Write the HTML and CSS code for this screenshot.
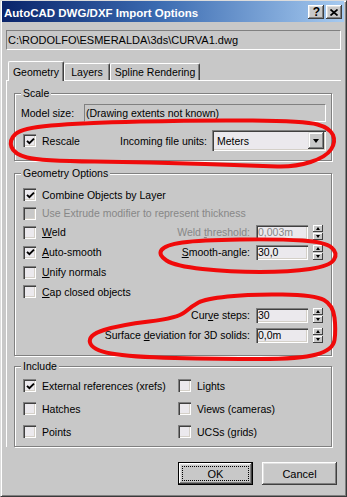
FILE: index.html
```html
<!DOCTYPE html>
<html>
<head>
<meta charset="utf-8">
<title>AutoCAD DWG/DXF Import Options</title>
<link rel="stylesheet" href="styles.css">
</head>
<body>
<div class="window">
  <div class="titlebar">
    <span class="title">AutoCAD DWG/DXF Import Options</span>
    <div class="tbtns">
      <span class="tbtn q">?</span>
      <span class="tbtn"><svg width="8" height="7" viewBox="0 0 8 7"><path d="M0.5 0.5 L7.5 6.5 M7.5 0.5 L0.5 6.5" stroke="#000" stroke-width="1.7"/></svg></span>
    </div>
  </div>
  <div class="client">
    <div class="pathfield">C:\RODOLFO\ESMERALDA\3ds\CURVA1.dwg</div>
    <div class="tabs">
      <div class="tab active t-geo">Geometry</div>
      <div class="tab t-lay">Layers</div>
      <div class="tab t-spl">Spline Rendering</div>
    </div>
    <div class="panel">
      <div class="group g-scale">
        <div class="legend">Scale</div>
        <div class="row r-model">
          <span class="lbl-model">Model size:</span>
          <div class="rofield">(Drawing extents not known)</div>
        </div>
        <div class="row r-rescale">
          <span class="cb"><svg width="9" height="9" viewBox="0 0 9 9"><path d="M1 3.8 L3.4 6.2 L8 1.6" fill="none" stroke="#000" stroke-width="1.9"/></svg></span>
          <span class="cbtext grow">Rescale</span>
          <span>Incoming file units:</span>
          <div class="combo">
            <span class="combo-text">Meters</span>
            <span class="combo-btn"><span class="tri-down"></span></span>
          </div>
        </div>
      </div>

      <div class="group g-geo">
        <div class="legend">Geometry Options</div>
        <div class="crow h19 first">
          <span class="cb"><svg width="9" height="9" viewBox="0 0 9 9"><path d="M1 3.8 L3.4 6.2 L8 1.6" fill="none" stroke="#000" stroke-width="1.9"/></svg></span>
          <span class="cbtext">Combine Objects by Layer</span>
        </div>
        <div class="crow h18 disabled">
          <span class="cb off"></span>
          <span class="cbtext">Use Extrude modifier to represent thickness</span>
        </div>
        <div class="crow h20">
          <span class="cb"></span>
          <span class="cbtext grow"><u>W</u>eld</span>
          <span class="flabel dim">Weld <u>t</u>hreshold:</span>
          <div class="field dim">0,003m</div>
          <div class="spin"><span class="sup"><span class="tri-up"></span></span><span class="sdn"><span class="tri-dn"></span></span></div>
        </div>
        <div class="crow h20">
          <span class="cb"><svg width="9" height="9" viewBox="0 0 9 9"><path d="M1 3.8 L3.4 6.2 L8 1.6" fill="none" stroke="#000" stroke-width="1.9"/></svg></span>
          <span class="cbtext grow"><u>A</u>uto-smooth</span>
          <span class="flabel"><u>S</u>mooth-angle:</span>
          <div class="field">30,0</div>
          <div class="spin"><span class="sup"><span class="tri-up"></span></span><span class="sdn"><span class="tri-dn"></span></span></div>
        </div>
        <div class="crow h20">
          <span class="cb"></span>
          <span class="cbtext"><u>U</u>nify normals</span>
        </div>
        <div class="crow h19">
          <span class="cb"></span>
          <span class="cbtext"><u>C</u>ap closed objects</span>
        </div>
        <div class="crow h20 right gap4">
          <span class="flabel">Cur<u>v</u>e steps:</span>
          <div class="field">30</div>
          <div class="spin"><span class="sup"><span class="tri-up"></span></span><span class="sdn"><span class="tri-dn"></span></span></div>
        </div>
        <div class="crow h20 right">
          <span class="flabel">Surface <u>d</u>eviation for 3D solids:</span>
          <div class="field">0,0m</div>
          <div class="spin"><span class="sup"><span class="tri-up"></span></span><span class="sdn"><span class="tri-dn"></span></span></div>
        </div>
      </div>

      <div class="group g-inc">
        <div class="legend">Include</div>
        <div class="incgrid">
          <div class="crow h23">
            <span class="cb"><svg width="9" height="9" viewBox="0 0 9 9"><path d="M1 3.8 L3.4 6.2 L8 1.6" fill="none" stroke="#000" stroke-width="1.9"/></svg></span>
            <span class="cbtext">External references (xrefs)</span>
          </div>
          <div class="crow h23"><span class="cb"></span><span class="cbtext">Lights</span></div>
          <div class="crow h23"><span class="cb"></span><span class="cbtext">Hatches</span></div>
          <div class="crow h23"><span class="cb"></span><span class="cbtext">Views (cameras)</span></div>
          <div class="crow h23"><span class="cb"></span><span class="cbtext">Points</span></div>
          <div class="crow h23"><span class="cb"></span><span class="cbtext">UCSs (grids)</span></div>
        </div>
      </div>
    </div>

    <div class="buttons">
      <div class="btn default"><span>OK</span></div>
      <div class="btn"><span>Cancel</span></div>
    </div>
  </div>

  <svg class="annot" width="347" height="497" viewBox="0 0 347 497">
    <path d="M15.5 134 Q22 128 51 125.5 Q80 123 140 121.5 Q200 120 252.5 120.5 Q305 121 317.5 124.5 Q330 128 333 135 Q336 142 331 149.5 Q326 157 310.5 162 Q295 167 277.5 166.5 Q260 166 205 164 Q150 162 95 161.5 Q40 161 27 157.5 Q14 154 11.5 147 Q9 140 15.5 134 Z"/>
    <path d="M161.5 250 Q165 245 182.5 242.5 Q200 240 240 239.5 Q280 239 302.5 240.5 Q325 242 331.5 247.5 Q338 253 334 259.5 Q330 266 310 269 Q290 272 260 272 Q230 272 202.5 269 Q175 266 166.5 260.5 Q158 255 161.5 250 Z"/>
    <path d="M198.5 302.5 Q205 299 227.5 296.5 Q250 294 282.5 294.5 Q315 295 324 300 Q333 305 334.5 317.5 Q336 330 334.5 340 Q333 350 316.5 354.5 Q300 359 260 359 Q220 359 175 358 Q130 357 111 353.5 Q92 350 90 342.5 Q88 335 104 330 Q120 325 149 321.5 Q178 318 185 312 Q192 306 198.5 302.5 Z"/>
  </svg>
</div>
</body>
</html>
```
FILE: styles.css
```css
* { box-sizing: border-box; }
html, body { margin: 0; padding: 0; background: #c8c8c8; }
body {
  font-family: "Liberation Sans", Arial, sans-serif;
  font-size: 10.5px;
  color: #000;
}
u { text-decoration: underline; text-underline-offset: 1px; }

.window {
  position: relative;
  width: 347px;
  height: 497px;
  background: #c8c8c8;
  border: 1px solid;
  border-color: #dcdcdc #3a3a3a #3a3a3a #dcdcdc;
  padding: 0 2px 1px 1px;
  box-shadow: inset 1px 1px 0 #fff, inset -1px -1px 0 #808080;
  display: flex;
  flex-direction: column;
}

/* title bar */
.titlebar {
  height: 21px;
  margin-top: 0;
  display: flex;
  align-items: flex-start;
  background: linear-gradient(90deg, #0a246a 0%, #3a6ab0 45%, #a6caf0 100%);
  padding-left: 2px;
}
.title {
  color: #fff;
  font-weight: bold;
  font-size: 11.5px;
  line-height: 13px;
  margin-top: 6px;
  white-space: nowrap;
}
.tbtns {
  margin-left: auto;
  margin-right: 2px;
  margin-top: 4px;
  display: flex;
  gap: 2px;
}
.tbtn {
  width: 16px;
  height: 14px;
  background: #c8c8c8;
  box-shadow: inset -1px -1px 0 #404040, inset 1px 1px 0 #fff, inset -2px -2px 0 #808080, inset 2px 2px 0 #e0e0e0;
  display: flex;
  align-items: center;
  justify-content: center;
}
.tbtn.q {
  font-weight: bold;
  font-size: 12px;
  line-height: 14px;
  padding-left: 1px;
}

/* client */
.client {
  flex: 1;
  display: flex;
  flex-direction: column;
}
.pathfield {
  margin: 8px 3px 0 4px;
  height: 20px;
  border: 1px solid;
  border-color: #808080 #fff #fff #808080;
  font-size: 11px;
  line-height: 18px;
  padding-left: 1px;
  white-space: nowrap;
}

/* tabs */
.tabs {
  margin-top: 11px;
  height: 19px;
  display: flex;
  align-items: flex-end;
  padding-left: 6px;
  position: relative;
  z-index: 1;
}
.tab {
  height: 17px;
  border-top: 1px solid #fff;
  border-left: 1px solid #fff;
  border-right: 1px solid #404040;
  box-shadow: inset -1px 0 0 #808080;
  border-radius: 2px 2px 0 0;
  display: flex;
  align-items: center;
  justify-content: center;
  white-space: nowrap;
  background: #c8c8c8;
}
.tab.active {
  height: 19px;
  margin-bottom: -1px;
  height: 20px;
}
.t-geo { width: 56px; }
.t-lay { width: 46px; }
.t-spl { width: 90px; }

/* panel */
.panel {
  margin: 0 3px 0 4px;
  border-top: 1px solid #fff;
  border-left: 1px solid #fff;
  padding: 0 9px 0 7px;
}

/* group boxes */
.group {
  width: 318px;
  border: 1px solid #808080;
  box-shadow: inset 1px 1px 0 #fff, 1px 1px 0 #fff;
}
.legend {
  width: fit-content;
  margin: -7px 0 0 6px;
  padding: 0 2px;
  line-height: 13px;
  background: #c8c8c8;
  position: relative;
}
.g-scale { margin-top: 12px; padding-bottom: 9px; }
.g-geo { margin-top: 12px; padding-bottom: 10px; }
.g-inc { margin-top: 10px; padding-bottom: 3px; }

.row { display: flex; align-items: center; }
.r-model { margin-top: 4px; height: 18px; padding-left: 6px; }
.lbl-model { width: 63px; }
.rofield {
  width: 242px;
  height: 18px;
  border: 1px solid;
  border-color: #808080 #fff #fff #808080;
  line-height: 16px;
  padding-left: 1px;
}
.r-rescale { margin-top: 8px; height: 21px; padding: 0 5px 0 8px; }
.grow { flex: 1; }

/* checkbox */
.cb {
  width: 13px;
  height: 13px;
  flex: none;
  background: #ebe9ed;
  box-shadow: inset 1px 1px 0 #808080, inset 2px 2px 0 #404040, inset -1px -1px 0 #fff, inset -2px -2px 0 #d4d0c8;
  display: flex;
  align-items: center;
  justify-content: center;
  padding: 1px 0 0 1px;
}
.cb.off { background: #c8c8c8; }
.cbtext { margin-left: 6px; white-space: nowrap; }

/* combo */
.combo {
  width: 114px;
  height: 21px;
  margin-left: 5px;
  background: #ebe9ed;
  box-shadow: inset 1px 1px 0 #808080, inset 2px 2px 0 #404040, inset -1px -1px 0 #fff, inset -2px -2px 0 #d4d0c8;
  display: flex;
  align-items: center;
  padding: 2px;
}
.combo-text { padding-left: 3px; }
.combo-btn {
  margin-left: auto;
  width: 16px;
  height: 17px;
  background: #c8c8c8;
  box-shadow: inset -1px -1px 0 #404040, inset 1px 1px 0 #e0e0e0, inset -2px -2px 0 #808080, inset 2px 2px 0 #fff;
  display: flex;
  align-items: center;
  justify-content: center;
}
.tri-down {
  width: 0; height: 0;
  border-left: 3.5px solid transparent;
  border-right: 3.5px solid transparent;
  border-top: 4px solid #000;
}

/* checkbox/field rows */
.crow {
  display: flex;
  align-items: center;
  padding: 0 8px;
}
.crow.first { margin-top: 5px; }
.h18 { height: 18px; }
.h19 { height: 19px; }
.h20 { height: 20px; }
.h23 { height: 23px; }
.crow.right { justify-content: flex-end; }
.crow.gap4 { margin-top: 4px; }
.disabled .cbtext { color: #878787; }
.flabel { white-space: nowrap; }
.dim { color: #878787; }
.field {
  width: 52px;
  height: 15px;
  margin-left: 6px;
  background: #ebe9ed;
  box-shadow: inset 1px 1px 0 #808080, inset 2px 2px 0 #404040, inset -1px -1px 0 #fff, inset -2px -2px 0 #d4d0c8;
  line-height: 15px;
  padding-left: 2px;
  flex: none;
}
.spin {
  margin-left: 5px;
  width: 10px;
  height: 15px;
  display: flex;
  flex-direction: column;
  gap: 1px;
  flex: none;
}
.sup, .sdn {
  flex: 1;
  background: #c8c8c8;
  box-shadow: inset -1px -1px 0 #404040, inset 1px 1px 0 #fff;
  display: flex;
  align-items: center;
  justify-content: center;
}
.tri-up {
  width: 0; height: 0;
  border-left: 2.5px solid transparent;
  border-right: 2.5px solid transparent;
  border-bottom: 3px solid #000;
}
.tri-dn {
  width: 0; height: 0;
  border-left: 2.5px solid transparent;
  border-right: 2.5px solid transparent;
  border-top: 3px solid #000;
}

.incgrid {
  margin-top: 1px;
  display: grid;
  grid-template-columns: 163px 1fr;
}
.incgrid .crow:nth-child(2n) { padding-left: 0; }

/* buttons */
.buttons {
  margin-top: 15px;
  display: flex;
  justify-content: flex-end;
  gap: 9px;
  padding-right: 7px;
}
.btn {
  position: relative;
  width: 75px;
  height: 23px;
  background: #c8c8c8;
  box-shadow: inset -1px -1px 0 #404040, inset 1px 1px 0 #fff, inset -2px -2px 0 #808080, inset 2px 2px 0 #e0e0e0;
  display: flex;
  align-items: center;
  justify-content: center;
  font-size: 11px;
}
.btn.default {
  border: 1px solid #000;
}
.btn.default::after {
  content: "";
  position: absolute;
  left: 3px; top: 3px; right: 3px; bottom: 3px;
  border: 1px dotted #000;
}

/* red hand-drawn annotations */
.annot {
  position: absolute;
  left: -1px;
  top: -1px;
  pointer-events: none;
}
.annot path {
  fill: none;
  stroke: #f00a0a;
  stroke-width: 4;
  stroke-linecap: round;
  stroke-linejoin: round;
}
```
